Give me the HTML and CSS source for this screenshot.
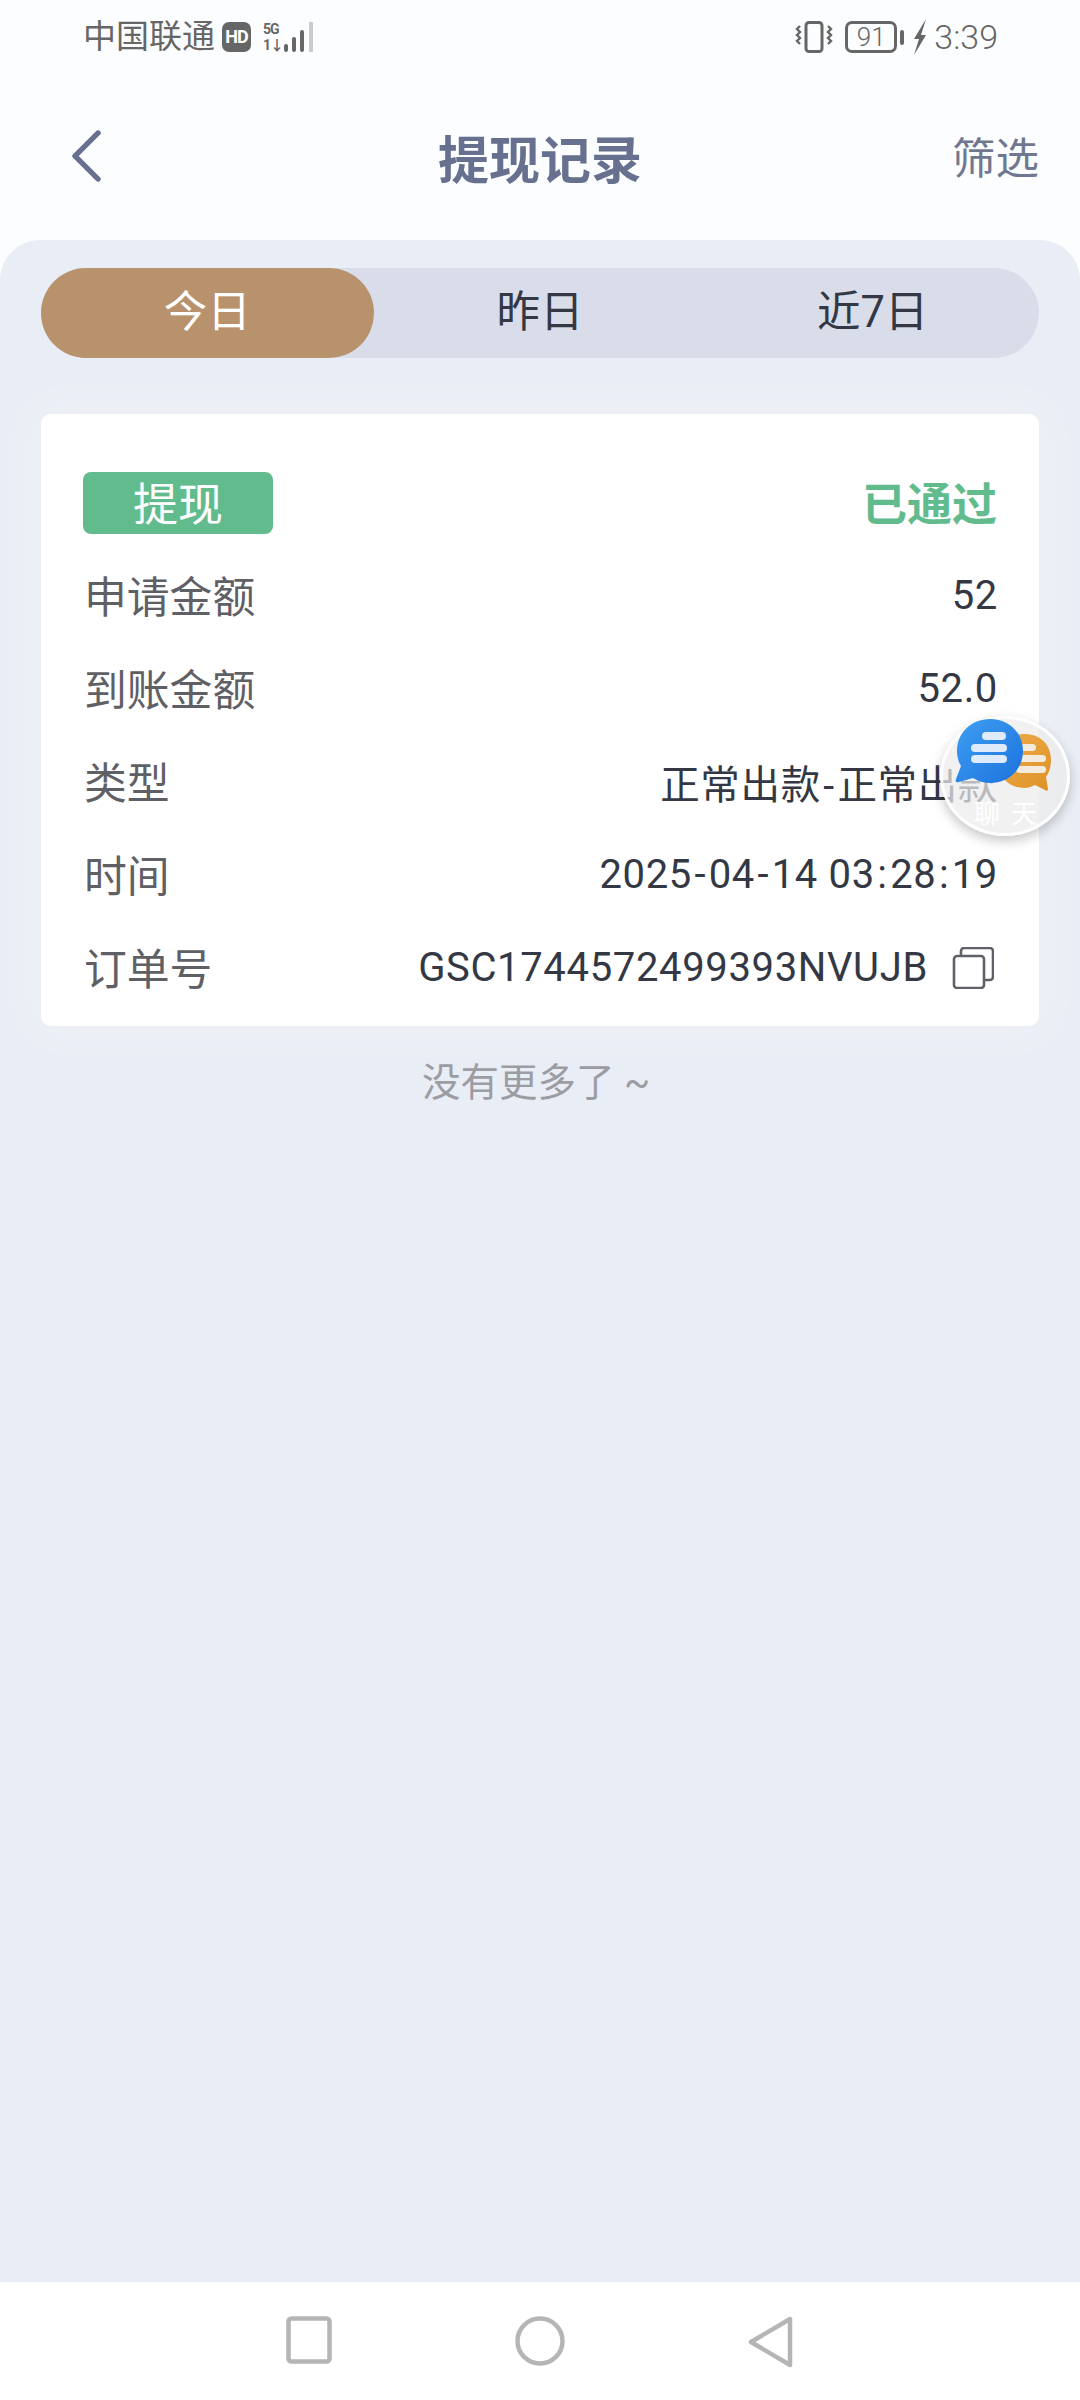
FILE: index.html
```html
<!DOCTYPE html>
<html lang="zh-CN">
<head>
<meta charset="utf-8">
<title>提现记录</title>
<link rel="stylesheet" href="styles.css">
</head>
<body>
<div class="page">
  <div class="top">
    <div class="status">
      <div class="status-left">
        <span class="carrier">中国联通</span>
        <span class="hd">HD</span>
        <span class="net"><span>5G</span><span>1↓</span></span>
        <svg class="signal" width="34" height="32" viewBox="0 0 34 32">
          <rect x="0" y="23" width="4" height="8" rx="2" fill="#666"/>
          <rect x="8" y="16" width="4" height="15" rx="2" fill="#666"/>
          <rect x="16" y="9" width="4" height="22" rx="2" fill="#666"/>
          <rect x="25" y="1" width="4" height="30" fill="#ccc"/>
        </svg>
      </div>
      <div class="status-right">
        <svg class="vibrate" width="38" height="32" viewBox="0 0 38 32" fill="none" stroke="#666">
          <rect x="11" y="1.5" width="16" height="29" rx="3" stroke-width="3"/>
          <path d="M5 5l-3 3 3 3-3 3 3 3-3 3 3 3 M33 5l3 3-3 3 3 3-3 3 3 3-3 3" stroke-width="2.4"/>
        </svg>
        <span class="battery">91</span>
        <span class="nub"></span>
        <svg class="bolt" width="14" height="36" viewBox="0 0 14 36"><path d="M13 0L1 20h5L1 36 13 16H8z" fill="#666"/></svg>
        <span class="time">3:39</span>
      </div>
    </div>
    <header class="nav">
      <svg class="back" width="30" height="54" viewBox="0 0 30 54" fill="none"><path d="M27 3L4 27l23 24" stroke="#67708f" stroke-width="5.5" stroke-linecap="round" stroke-linejoin="round"/></svg>
      <h1 class="title">提现记录</h1>
      <span class="filter">筛选</span>
    </header>
  </div>

  <main class="panel">
    <div class="tabs">
      <div class="tab tab-active">今日</div>
      <div class="tab">昨日</div>
      <div class="tab">近7日</div>
    </div>
    <section class="card">
      <div class="row">
        <span class="badge">提现</span>
        <span class="state">已通过</span>
      </div>
      <div class="row"><span class="label">申请金额</span><span class="value">52</span></div>
      <div class="row"><span class="label">到账金额</span><span class="value">52.0</span></div>
      <div class="row"><span class="label">类型</span><span class="value value-cjk">正常出款<span class="sep">-</span>正常出款</span></div>
      <div class="row"><span class="label">时间</span><span class="value">2025<span class="sep">-</span>04<span class="sep">-</span>14 03<span class="sep">:</span>28<span class="sep">:</span>19</span></div>
      <div class="row">
        <span class="label">订单号</span>
        <span class="order">
          <span class="value">GSC1744572499393NVUJB</span>
          <svg class="copy" width="42" height="42" viewBox="0 0 42 42" fill="none" stroke="#5f6168" stroke-width="2.6">
            <rect x="2" y="9" width="30" height="32" rx="3"/>
            <path d="M9 8V4a3 3 0 0 1 3-3h26a3 3 0 0 1 3 3v26a3 3 0 0 1-3 3h-5"/>
          </svg>
        </span>
      </div>
    </section>
    <p class="more">没有更多了 ~</p>
  </main>

  <footer class="sysnav">
    <svg width="46" height="48" viewBox="0 0 46 48" fill="none" stroke="#b5b5b5" stroke-width="4.5"><rect x="2.5" y="2.5" width="41" height="43" rx="3"/></svg>
    <svg width="50" height="50" viewBox="0 0 50 50" fill="none" stroke="#b5b5b5" stroke-width="4.5"><circle cx="25" cy="25" r="22.5"/></svg>
    <svg width="46" height="52" viewBox="0 0 46 52" fill="none" stroke="#b5b5b5" stroke-width="4.5" stroke-linejoin="round"><path d="M42 3v46L3 26z"/></svg>
  </footer>

  <aside class="chat">
    <svg class="chat-icon" width="100" height="76" viewBox="0 0 100 76">
      <defs>
        <linearGradient id="chat-blue" x1="0" y1="0" x2="1" y2="1"><stop offset="0" stop-color="#3f9ff2"/><stop offset="1" stop-color="#1c72dd"/></linearGradient>
        <linearGradient id="chat-orange" x1="0" y1="0" x2="1" y2="1"><stop offset="0" stop-color="#f0ad4c"/><stop offset="1" stop-color="#dd9126"/></linearGradient>
      </defs>
      <path d="M70 17c16 0 27 10 27 26 0 7-2 13-5 17l2 12c0 2-2 2-3 1l-10-5c-4 2-7 3-11 3-15 0-26-11-26-27s11-27 26-27z" fill="url(#chat-orange)"/>
      <g fill="#f3ebe0"><rect x="62" y="27" width="20" height="7" rx="3.5"/><rect x="62" y="38" width="30" height="7" rx="3.5"/><rect x="62" y="49" width="30" height="7" rx="3.5"/></g>
      <path d="M36 2c19 0 33 14 33 32S55 66 36 66c-6 0-12-2-17-5l-14 4c-3 1-4-1-3-3l5-13C4 44 3 39 3 34 3 16 17 2 36 2z" fill="url(#chat-blue)"/>
      <g fill="#dfeafb"><rect x="28" y="15" width="24" height="8" rx="4"/><rect x="17" y="27" width="36" height="8" rx="4"/><rect x="17" y="38" width="36" height="8" rx="4"/></g>
    </svg>
    <span class="chat-text">聊天</span>
  </aside>
</div>
</body>
</html>
```

FILE: styles.css
```css
* { box-sizing: border-box; margin: 0; padding: 0; }
html, body { width: 1080px; height: 2400px; overflow: hidden; }
body { font-family: "Roboto", "Noto Sans CJK SC", sans-serif; background: #fcfdfe; }

.page { position: relative; width: 1080px; height: 2400px; display: flex; flex-direction: column; }
.top { height: 240px; background: #fcfdfe; display: flex; flex-direction: column; }

.status { height: 72px; padding: 19px 82px 0 83px; display: flex; justify-content: space-between; align-items: flex-start; color: #666; }
.status-left, .status-right { display: flex; align-items: center; height: 36px; }
.carrier { font-size: 33px; line-height: 36px; }
.hd { width: 29px; height: 30px; margin-left: 7px; background: #666; color: #fff; border-radius: 7px; font-size: 18px; font-weight: 700; line-height: 30px; text-align: center; letter-spacing: -1px; }
.net { margin-left: 12px; width: 18px; display: flex; flex-direction: column; font-size: 14px; font-weight: 700; line-height: 16px; letter-spacing: -1px; }
.signal { margin-left: 3px; }
.vibrate { margin-right: 12px; }
.battery { width: 52px; height: 32px; border: 3px solid #666; border-radius: 7px; font-size: 26px; font-weight: 300; line-height: 26px; text-align: center; }
.nub { width: 4px; height: 15px; margin-left: 3px; background: #666; border-radius: 2px; }
.bolt { margin-left: 9px; }
.time { margin-left: 7px; font-size: 34px; font-weight: 300; line-height: 36px; }

.nav { position: relative; flex: 1; display: flex; align-items: center; justify-content: center; padding-top: 12px; }
.back { position: absolute; left: 71px; top: 57px; transform: scaleY(.96); }
.title { font-size: 51px; font-weight: 700; line-height: 60px; color: #67708f; }
.filter { position: absolute; right: 41px; top: 60px; font-size: 43.5px; line-height: 56px; color: #70788f; }

.panel { flex: 1; padding: 28px 41px 0; background: #e9edf5; border-radius: 40px 40px 0 0; }
.tabs { height: 90px; display: grid; grid-template-columns: repeat(3, 1fr); background: #d9ddea; border-radius: 45px; }
.tab { display: flex; align-items: center; justify-content: center; padding-bottom: 9px; font-size: 43.5px; color: #333844; }
.tab-active { background: #b8926c; color: #fff; border-radius: 45px; }

.card { margin-top: 56px; padding: 42px 0 12px; background: #fff; border-radius: 10px; box-shadow: 0 0 50px 14px rgba(255, 255, 255, .22); }
.row { height: 93px; padding: 0 42px; display: flex; align-items: center; justify-content: space-between; }
.badge { width: 190px; height: 62px; padding-top: 3px; background: #62bb8d; color: #fff; border-radius: 8px; font-size: 45px; line-height: 62px; text-align: center; }
.state { padding-bottom: 3px; font-size: 45px; font-weight: 700; color: #62bb8d; }
.label { padding: 0 0 3px 1px; font-size: 42.8px; color: #5f6066; }
.value { font-size: 40px; letter-spacing: .65px; color: #333844; margin-right: -1px; }
.value-cjk { font-size: 39.5px; }
.sep { padding: 0 2.5px; }
.order { display: flex; align-items: center; gap: 25px; padding-right: 3px; }
.copy { flex: none; }
.more { margin-top: 30px; font-size: 38.5px; line-height: 54px; text-align: center; color: #9b9da3; padding-right: 8px; }

.sysnav { position: relative; height: 118px; padding: 34px 0 0 286px; background: #fff; display: flex; align-items: flex-start; gap: 183px; }

.chat { position: absolute; left: 940px; top: 716px; width: 130px; height: 120px; border-radius: 50%; background: rgba(236, 236, 236, .72); border: 3px solid rgba(255, 255, 255, .9); box-shadow: 0 5px 12px rgba(0, 0, 0, .22); }
.chat-icon { position: absolute; left: 11px; top: -2px; }
.chat-text { position: absolute; left: 31px; top: 79px; font-size: 26px; line-height: 32px; letter-spacing: 11px; color: #fff; white-space: nowrap; }
```
